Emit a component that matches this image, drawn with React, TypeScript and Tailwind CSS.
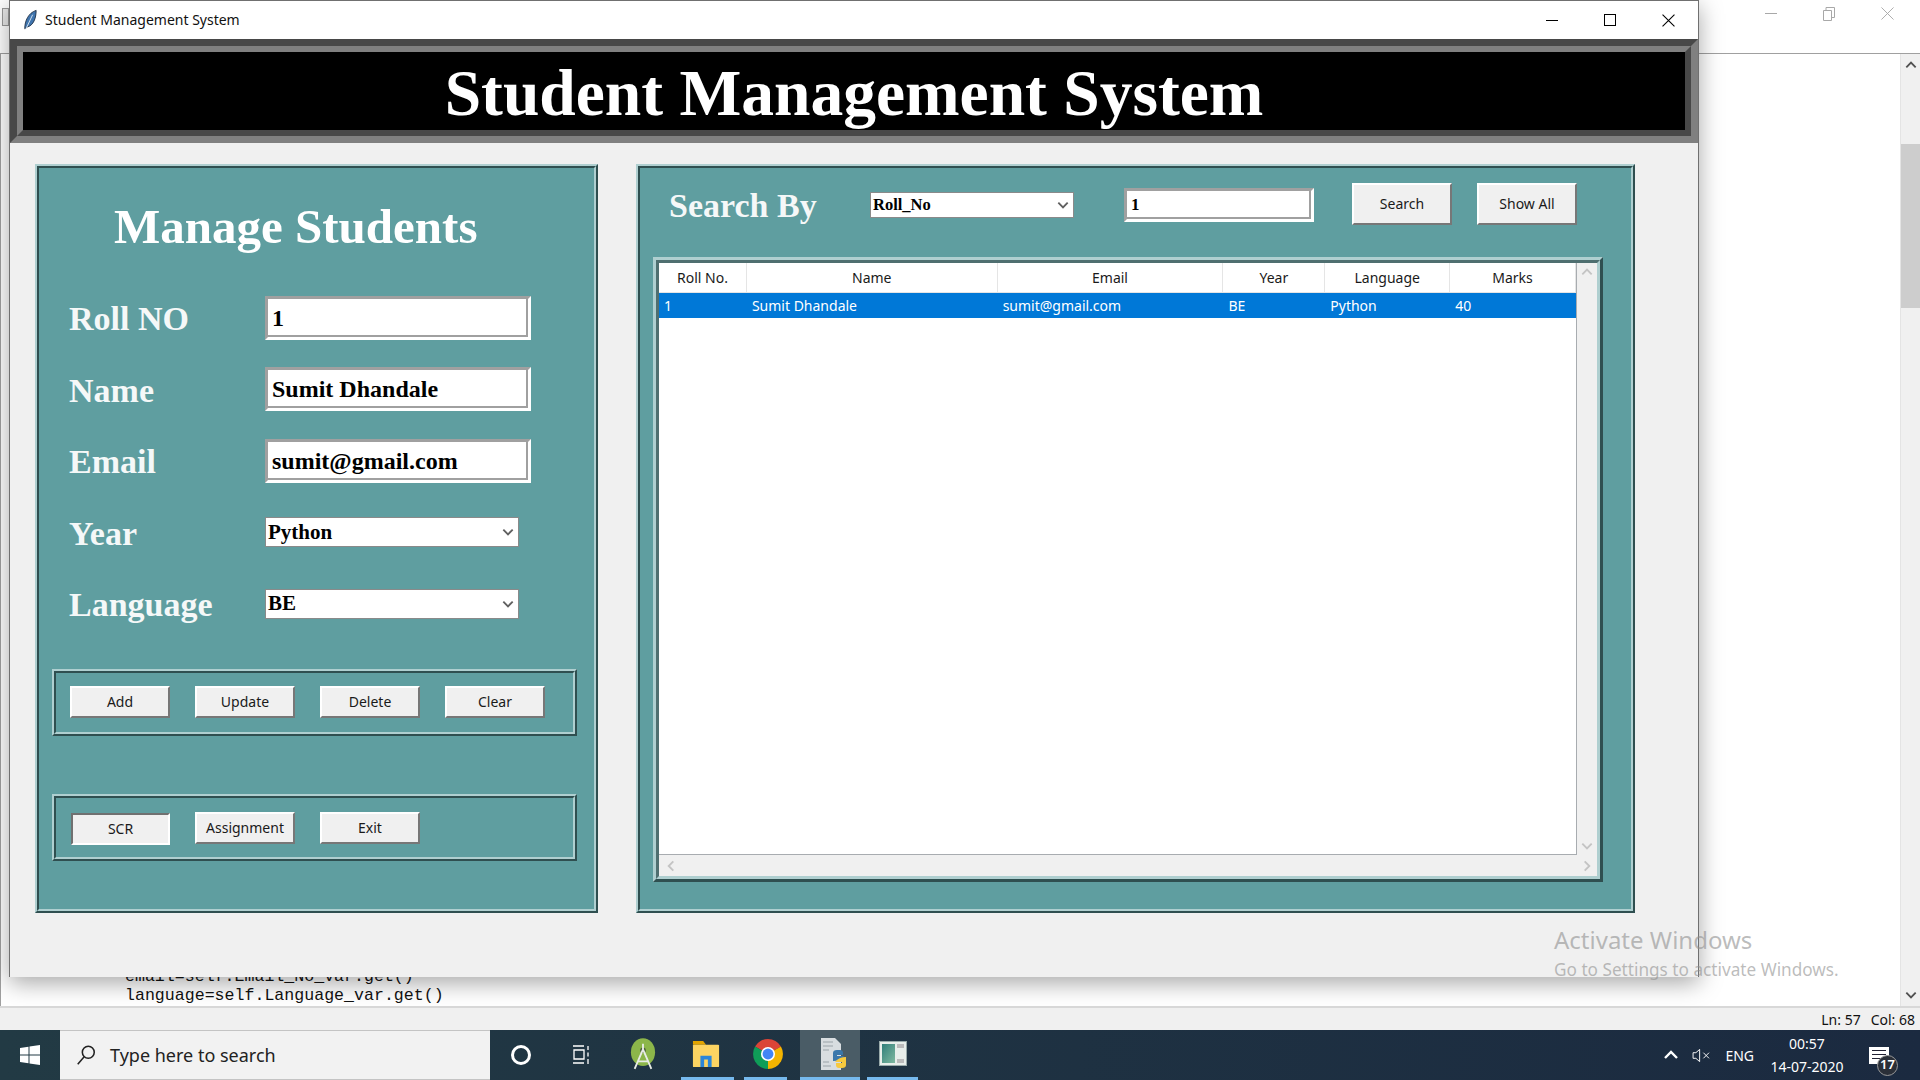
const serif = "font-['Liberation_Serif',serif] font-bold";
const ui = "font-['Noto_Sans',sans-serif]";

const columns = [
  { title: 'Roll No.', width: 'w-[88px]', value: '1' },
  { title: 'Name', width: 'w-[251px]', value: 'Sumit Dhandale' },
  { title: 'Email', width: 'w-[226px]', value: 'sumit@gmail.com' },
  { title: 'Year', width: 'w-[102px]', value: 'BE' },
  { title: 'Language', width: 'w-[125px]', value: 'Python' },
  { title: 'Marks', width: 'w-[126px]', value: '40' },
];

function Chevron({ dir = 'down', className = '' }: { dir?: 'down' | 'up' | 'left' | 'right'; className?: string }) {
  const points = {
    down: '2,4 6,8 10,4',
    up: '2,8 6,4 10,8',
    left: '8,2 4,6 8,10',
    right: '4,2 8,6 4,10',
  }[dir];
  return (
    <svg viewBox="0 0 12 12" className={className} fill="none" stroke="currentColor" strokeWidth="1.6">
      <polyline points={points} />
    </svg>
  );
}

function Ridge({ className = '', children }: { className?: string; children: React.ReactNode }) {
  return (
    <div className={`border-2 border-t-[#afcfd0] border-l-[#afcfd0] border-r-[#2f4f50] border-b-[#2f4f50] ${className}`}>
      <div className="h-full w-full border-2 border-t-[#2f4f50] border-l-[#2f4f50] border-r-[#afcfd0] border-b-[#afcfd0] bg-[#5f9ea0]">
        {children}
      </div>
    </div>
  );
}

function Entry({ value, className = '', text = '' }: { value: string; className?: string; text?: string }) {
  return (
    <div className={`border-[3px] border-t-[#a0a0a0] border-l-[#a0a0a0] border-r-white border-b-white ${className}`}>
      <div className={`flex h-full items-center border-r-2 border-b-2 border-[#a0a0a0] bg-white pl-[4px] text-black ${serif} ${text}`}>
        <span className="translate-y-[1px]">{value}</span>
      </div>
    </div>
  );
}

function Combo({ value, className = '', text = '' }: { value: string; className?: string; text?: string }) {
  return (
    <div className={`flex items-center justify-between border border-[#8a8a8a] bg-white pl-[2px] pr-[3px] text-black ${serif} ${text} ${className}`}>
      <span>{value}</span>
      <Chevron className="h-[14px] w-[14px] text-[#606060]" />
    </div>
  );
}

function Btn({ label, className = 'w-[100px] h-[32px]', sunken = false }: { label: string; className?: string; sunken?: boolean }) {
  const edge = sunken
    ? 'border-t-[#707070] border-l-[#707070] border-r-white border-b-white'
    : 'border-t-white border-l-white border-r-[#777777] border-b-[#777777]';
  return (
    <div className={`flex items-center justify-center border-2 bg-[#f0f0f0] text-[14px] text-[#1a1a1a] ${ui} ${edge} ${className}`}>
      {label}
    </div>
  );
}

function FormRow({ label, children }: { label: string; children: React.ReactNode }) {
  return (
    <div className="flex h-[71.5px] items-center pl-[30px]">
      <div className={`w-[196px] translate-y-[1px] text-[34px] text-[#f5f8f8] ${serif}`}>{label}</div>
      {children}
    </div>
  );
}

function ManagePanel() {
  return (
    <Ridge className="h-[749px] w-[563px]">
      <div className={`flex h-[114px] items-center pl-[75px] pt-[3px] text-[49px] text-white ${serif}`}>Manage Students</div>
      <FormRow label="Roll NO">
        <Entry value="1" className="h-[44px] w-[266px]" text="text-[24px]" />
      </FormRow>
      <FormRow label="Name">
        <Entry value="Sumit Dhandale" className="h-[44px] w-[266px]" text="text-[24px]" />
      </FormRow>
      <FormRow label="Email">
        <Entry value="sumit@gmail.com" className="h-[44px] w-[266px]" text="text-[24px]" />
      </FormRow>
      <FormRow label="Year">
        <Combo value="Python" className="h-[30px] w-[254px]" text="text-[21px]" />
      </FormRow>
      <FormRow label="Language">
        <Combo value="BE" className="h-[30px] w-[254px]" text="text-[21px]" />
      </FormRow>
      <Ridge className="ml-[13px] mt-[29px] h-[67px] w-[525px]">
        <div className="flex gap-[25px] pl-[14px] pt-[13px]">
          <Btn label="Add" />
          <Btn label="Update" />
          <Btn label="Delete" />
          <Btn label="Clear" />
        </div>
      </Ridge>
      <Ridge className="ml-[13px] mt-[58px] h-[67px] w-[525px]">
        <div className="flex items-start gap-[25px] pl-[13px] pt-[14px]">
          <Btn label="SCR" sunken className="ml-[2px] mt-[1px] h-[32px] w-[99px]" />
          <Btn label="Assignment" />
          <Btn label="Exit" />
        </div>
      </Ridge>
    </Ridge>
  );
}

function StudentTable() {
  return (
    <div className="ml-[13px] mt-[15px] h-[625px] w-[950px] border-[3px] border-t-[#afcfd0] border-l-[#afcfd0] border-r-[#2f4f50] border-b-[#2f4f50]">
      <div className="h-full border-[3px] border-t-[#4f6f70] border-l-[#4f6f70] border-r-[#afcfd0] border-b-[#afcfd0] bg-[#f0f0f0]">
        <div className="flex h-[592px]">
          <div className={`w-[918px] border-r border-b border-[#a8acb0] bg-white text-[14px] ${ui}`}>
            <div className="flex h-[30px] text-[#1a1a1a]">
              {columns.map((col) => (
                <div key={col.title} className={`${col.width} flex items-center justify-center border-r border-b border-[#e5e5e5]`}>
                  {col.title}
                </div>
              ))}
            </div>
            <div className="flex h-[25px] bg-[#0078d7] text-white">
              {columns.map((col) => (
                <div key={col.title} className={`${col.width} flex items-center pl-[5px]`}>
                  {col.value}
                </div>
              ))}
            </div>
          </div>
          <div className="flex w-[22px] flex-col items-center justify-between py-[2px] text-[#c4c4c4]">
            <Chevron dir="up" className="h-[14px] w-[14px]" />
            <Chevron className="h-[14px] w-[14px]" />
          </div>
        </div>
        <div className="flex h-[22px] w-[940px] items-center justify-between px-[5px] text-[#c4c4c4]">
          <Chevron dir="left" className="h-[14px] w-[14px]" />
          <Chevron dir="right" className="h-[14px] w-[14px]" />
        </div>
      </div>
    </div>
  );
}

function SearchPanel() {
  return (
    <Ridge className="h-[749px] w-[999px]">
      <div className="flex h-[74px] items-center pl-[29px]">
        <div className={`w-[201px] text-[34px] text-[#f5f8f8] ${serif}`}>Search By</div>
        <Combo value="Roll_No" className="h-[26px] w-[204px]" text="text-[16.5px]" />
        <Entry value="1" className="ml-[50px] h-[34px] w-[190px]" text="text-[17px]" />
        <Btn label="Search" className="mb-[2px] ml-[38px] h-[42px] w-[100px] pb-[2px]" />
        <Btn label="Show All" className="mb-[2px] ml-[25px] h-[42px] w-[100px] pb-[2px]" />
      </div>
      <StudentTable />
    </Ridge>
  );
}

function AppWindow() {
  return (
    <div className="absolute left-[9px] top-0 flex h-[977px] w-[1690px] flex-col border-x border-t border-[#707070] bg-[#f0f0f0] shadow-[0_6px_22px_rgba(0,0,0,0.35)]">
      <div className={`flex h-[38px] shrink-0 items-center bg-white pl-[13px] text-[14px] text-[#111] ${ui}`}>
        <svg viewBox="0 0 16 24" className="h-[22px] w-[14px]">
          <path d="M2 22 C2 13 6 4 15 1 C15 10 12 18 5 20 Z" fill="#3f74ad" stroke="#1d2d42" strokeWidth="1" />
          <path d="M3 23 L11 6" stroke="#e4edf5" strokeWidth="1" />
        </svg>
        <span className="ml-[8px] -translate-y-[1px]">Student Management System</span>
        <div className="ml-auto flex items-center gap-[46px] pr-[23px]">
          <div className="h-px w-[12px] bg-black" />
          <div className="h-[12px] w-[12px] border border-black" />
          <svg viewBox="0 0 12 12" className="h-[13px] w-[13px]" stroke="black" strokeWidth="1">
            <path d="M0.5 0.5 L11.5 11.5 M11.5 0.5 L0.5 11.5" />
          </svg>
        </div>
      </div>
      <div className="h-[104px] shrink-0 border-[7px] border-t-[#484848] border-l-[#484848] border-r-[#808080] border-b-[#808080]">
        <div className="h-full border-[6px] border-t-[#808080] border-l-[#808080] border-r-[#484848] border-b-[#484848]">
          <div className={`flex h-full items-center justify-center bg-black pt-[5px] text-[65.5px] text-white ${serif}`}>
            Student Management System
          </div>
        </div>
      </div>
      <div className="flex gap-[38px] pl-[25px] pt-[21px]">
        <ManagePanel />
        <SearchPanel />
      </div>
    </div>
  );
}

function TrayIcons() {
  return (
    <div className={`ml-auto flex items-center text-[14px] text-white ${ui}`}>
      <Chevron dir="up" className="h-[18px] w-[18px]" />
      <svg viewBox="0 0 20 16" className="ml-[12px] h-[15px] w-[19px]" fill="none" stroke="white" strokeWidth="1">
        <path d="M1 5 H4 L8 1.5 V14.5 L4 11 H1 Z M12 5 L18 11 M18 5 L12 11" />
      </svg>
      <span className="ml-[14px]">ENG</span>
      <div className="ml-[15px] flex w-[76px] flex-col items-center leading-[23px]">
        <span>00:57</span>
        <span>14-07-2020</span>
      </div>
      <div className="relative ml-[24px] mr-[31px] h-[17px] w-[20px] bg-white">
        <div className="mx-[3px] mt-[3px] h-px bg-[#223]" />
        <div className="mx-[3px] mt-[3px] h-px bg-[#223]" />
        <div className="mx-[3px] mt-[3px] h-px bg-[#223]" />
        <div className="absolute left-[8px] top-[8px] flex h-[21px] w-[21px] items-center justify-center rounded-full border border-[#999] bg-[#2a2f38] text-[13px] font-semibold">
          17
        </div>
      </div>
    </div>
  );
}

function Taskbar() {
  return (
    <div className="flex h-[50px] shrink-0 bg-gradient-to-r from-[#223a44] to-[#1b2a40]">
      <div className="flex w-[60px] items-center justify-center">
        <svg viewBox="0 0 20 20" className="h-[20px] w-[20px]" fill="white">
          <path d="M0 3 L8.5 1.8 V9.5 H0 Z M9.5 1.6 L20 0 V9.5 H9.5 Z M0 10.5 H8.5 V18.2 L0 17 Z M9.5 10.5 H20 V20 L9.5 18.4 Z" />
        </svg>
      </div>
      <div className={`flex w-[430px] items-center border-y border-[#c4c4c4] bg-[#f2f2f2] pl-[15px] text-[18px] text-[#222] ${ui}`}>
        <svg viewBox="0 0 24 24" className="h-[22px] w-[22px]" fill="none" stroke="#222" strokeWidth="1.7">
          <circle cx="14.5" cy="9" r="6.5" />
          <path d="M10 14 L3 22" />
        </svg>
        <span className="ml-[13px]">Type here to search</span>
      </div>
      <div className="flex w-[61px] items-center justify-center">
        <div className="h-[20px] w-[20px] rounded-full border-[3px] border-white" />
      </div>
      <div className="flex w-[61px] items-center justify-center">
        <svg viewBox="0 0 22 20" className="h-[20px] w-[22px]" fill="none" stroke="white" strokeWidth="1.3">
          <path d="M2 1 H13 M3 5 H13 V14 H3 Z M2 18 H13 M17 1 V5 M17 7.5 V11.5 M17 14 V19" />
        </svg>
      </div>
      <div className="flex w-[61px] items-center justify-center border-b-[3px] border-transparent">
        <svg viewBox="0 0 28 34" className="h-[34px] w-[26px]">
          <ellipse cx="14" cy="15" rx="13" ry="15" fill="#8cb64a" />
          <circle cx="14" cy="13" r="3" fill="#4d5f3a" />
          <path d="M14 6 V13 M14 12 L5 33 M14 12 L23 33 M8 25 H20" stroke="#e8ece6" strokeWidth="2" fill="none" />
        </svg>
      </div>
      <div className="ml-[8px] flex w-[53px] items-center justify-center border-b-[3px] border-[#76b9ed] pr-[4px]">
        <svg viewBox="0 0 30 30" className="h-[30px] w-[28px]">
          <path d="M1 1 H12 L15 5 H1 Z" fill="#e2a400" />
          <rect x="1" y="5" width="28" height="24" rx="1" fill="#fcd462" />
          <path d="M9 29 V17 H21 V29 H17 V21 H13 V29 Z" fill="#2b86d9" />
        </svg>
      </div>
      <div className="ml-[10px] flex w-[43px] items-center justify-center border-b-[3px] border-[#76b9ed] pl-[4px]">
        <svg viewBox="0 0 32 32" className="h-[32px] w-[30px] shrink-0">
          <path d="M16 16 L2.2 8 A16 16 0 0 1 29.8 8 Z" fill="#db4437" />
          <path d="M16 16 L29.8 8 A16 16 0 0 1 16 32 Z" fill="#f4b400" />
          <path d="M16 16 L16 32 A16 16 0 0 1 2.2 8 Z" fill="#0f9d58" />
          <circle cx="16" cy="16" r="7.5" fill="white" />
          <circle cx="16" cy="16" r="5.8" fill="#4285f4" />
        </svg>
      </div>
      <div className="ml-[13px] flex w-[60px] items-center justify-center border-b-[3px] border-[#76b9ed] bg-[#4a5c66] pl-[5px]">
        <svg viewBox="0 0 28 34" className="h-[34px] w-[28px]">
          <path d="M2 1 H16 L22 7 V33 H2 Z" fill="#d8dde0" />
          <path d="M4 5 H14 M4 9 H14 M4 13 H10 M4 25 H10 M4 29 H12" stroke="#9aa3a8" strokeWidth="1" />
          <path d="M14 24 V16 Q14 13 18 13 H21 Q24 13 24 16 V18 H18 V19 H25 Q21 24 14 24 Z" fill="#3a77ab" />
          <path d="M27 20 V28 Q27 31 23 31 H20 Q17 31 17 28 V26 H23 V25 H16 Q20 20 27 20 Z" fill="#f7c93e" />
        </svg>
      </div>
      <div className="ml-[7px] flex w-[51px] items-center justify-center border-b-[3px] border-[#76b9ed]">
        <div className="flex h-[25px] w-[28px] gap-[2px] border border-[#9aa] bg-[#e8eeea] p-[2px]">
          <div className="w-[13px] bg-gradient-to-br from-[#2f7f7a] to-[#7fb9a0]" />
          <div className="flex-1 border-y-4 border-[#bbb]" />
        </div>
      </div>
      <TrayIcons />
    </div>
  );
}

export default function App() {
  return (
    <div className="relative flex h-[1080px] w-[1920px] flex-col overflow-hidden bg-white">
      <div className="flex h-[54px] shrink-0 items-center border-b border-[#a0a0a0] bg-white pl-[1715px] text-[#a0a0a0]">
        <div className="absolute left-[2px] top-[8px] h-[18px] w-[7px] border border-[#9a9a9a] bg-[#e8e8e8]" />
        <div className="mb-[26px] flex items-center gap-[46px] pl-[50px]">
          <div className="h-px w-[12px] bg-[#a8a8a8]" />
          <svg viewBox="0 0 12 14" className="h-[14px] w-[12px]" fill="none" stroke="#a8a8a8">
            <path d="M0.5 3.5 H8.5 V13.5 H0.5 Z M3 3 V0.5 H11.5 V10.5 H9" />
          </svg>
          <svg viewBox="0 0 14 14" className="h-[13px] w-[13px]" stroke="#a8a8a8">
            <path d="M0.5 0.5 L13.5 13.5 M13.5 0.5 L0.5 13.5" />
          </svg>
        </div>
      </div>
      <div className="flex min-h-0 flex-1">
        <div className="relative flex-1 border-l border-[#a0a0a0] font-['Liberation_Mono',monospace] text-[16.6px] leading-[19px] text-[#111]">
          <div className="pl-[124px] pt-[913px]">email=self.Email_No_var.get()</div>
          <div className="pl-[124px]">language=self.Language_var.get()</div>
        </div>
        <div className="flex w-[20px] flex-col items-center border-l border-[#e4e4e4] bg-[#f0f0f0] text-[#505050]">
          <Chevron dir="up" className="mt-[4px] h-[14px] w-[14px]" />
          <div className="mt-[72px] h-[164px] w-full bg-[#cdcdcd]" />
          <Chevron className="mb-[4px] mt-auto h-[14px] w-[14px]" />
        </div>
      </div>
      <div className={`flex h-[24px] shrink-0 items-center justify-end gap-[10px] border-t-2 border-[#d8d8d8] bg-[#f0f0f0] pr-[5px] text-[14px] text-[#111] ${ui}`}>
        <span>Ln: 57</span>
        <span>Col: 68</span>
      </div>
      <Taskbar />
      <AppWindow />
      <div className={`pointer-events-none absolute left-[1554px] top-[922px] text-[#8f8f8f]/60 ${ui}`}>
        <div className="text-[24px] leading-[36px]">Activate Windows</div>
        <div className="text-[17.2px] leading-[24px]">Go to Settings to activate Windows.</div>
      </div>
    </div>
  );
}
